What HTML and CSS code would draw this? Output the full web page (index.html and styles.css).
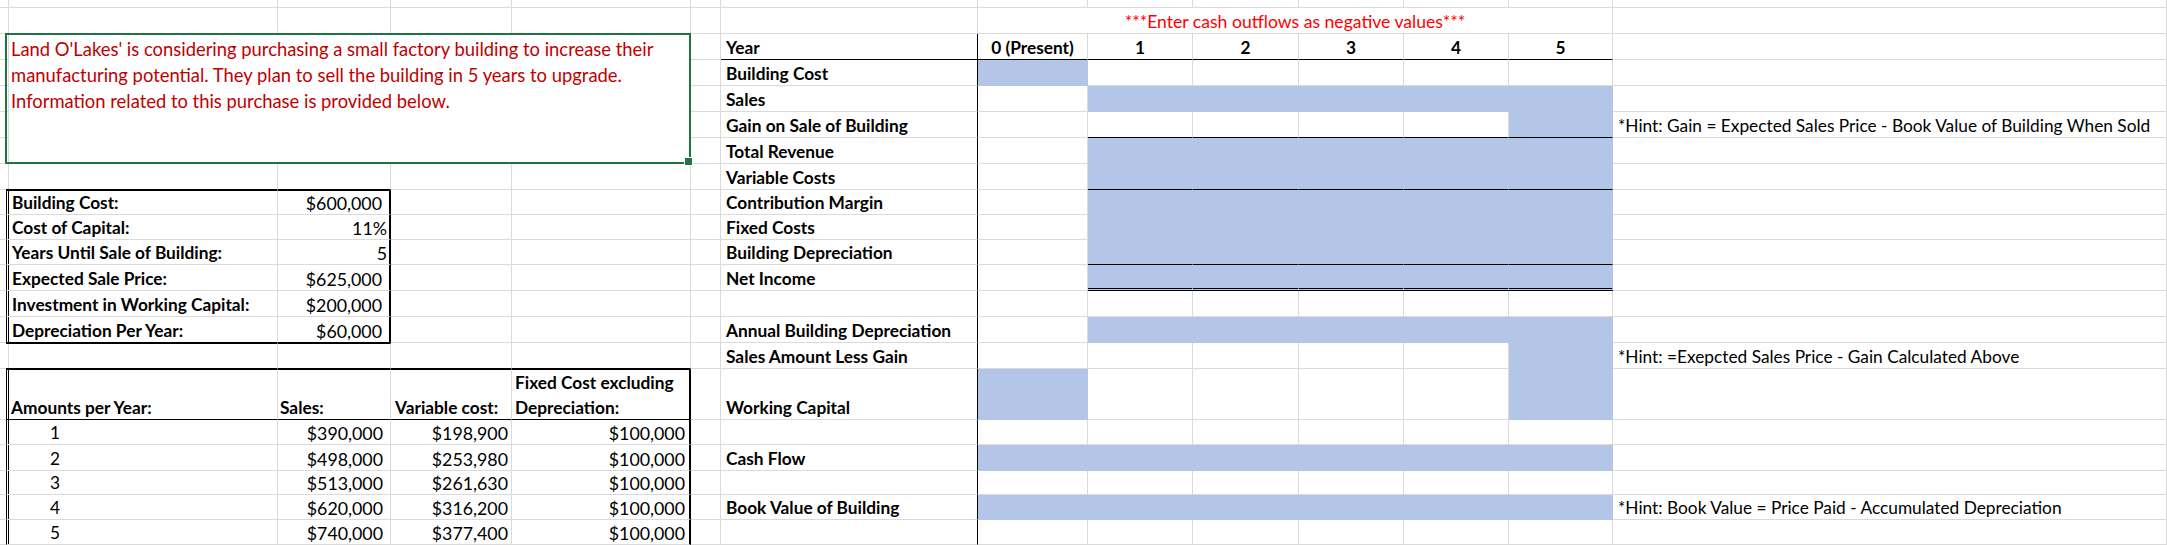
FILE: index.html
```html
<!DOCTYPE html>
<html lang="en">
<head>
<meta charset="utf-8">
<title>Land O'Lakes – Building Purchase</title>
<link rel="stylesheet" href="styles.css">
</head>
<body>
<div class="sheet">
<!-- row 0 -->
<div class="c"></div><div class="c"></div><div class="c"></div><div class="c"></div><div class="c"></div><div class="c"></div><div class="c"></div><div class="c"></div><div class="c"></div><div class="c"></div><div class="c"></div><div class="c"></div><div class="c"></div><div class="c"></div>
<!-- row 1 -->
<div class="c"></div><div class="c"></div><div class="c"></div><div class="c"></div><div class="c"></div><div class="c"></div><div class="c"></div>
<div class="c red">***Enter cash outflows as negative values***</div>
<div class="c"></div>
<!-- row 2 -->
<div class="c"></div>
<div class="note">Land O'Lakes' is considering purchasing a small factory building to increase their<br>manufacturing potential. They plan to sell the building in 5 years to upgrade.<br>Information related to this purchase is provided below.</div>
<div class="c"></div>
<div class="c b kb kr lbl">Year</div>
<div class="c b m kb">0 (Present)</div>
<div class="c b m kb">1</div><div class="c b m kb">2</div><div class="c b m kb">3</div><div class="c b m kb">4</div><div class="c b m kb">5</div>
<div class="c"></div>
<!-- row 3 -->
<div class="c"></div><div class="c"></div>
<div class="c b kr lbl">Building Cost</div>
<div class="c f"></div><div class="c"></div><div class="c"></div><div class="c"></div><div class="c"></div><div class="c"></div><div class="c"></div>
<!-- row 4 -->
<div class="c"></div><div class="c"></div>
<div class="c b kr lbl">Sales</div>
<div class="c"></div><div class="c f"></div><div class="c f"></div><div class="c f"></div><div class="c f"></div><div class="c f"></div><div class="c"></div>
<!-- row 5 -->
<div class="c"></div><div class="c"></div>
<div class="c b kr lbl">Gain on Sale of Building</div>
<div class="c"></div><div class="c kb"></div><div class="c kb"></div><div class="c kb"></div><div class="c kb"></div><div class="c f kb"></div>
<div class="c hint">*Hint: Gain = Expected Sales Price - Book Value of Building When Sold</div>
<!-- row 6 -->
<div class="c"></div><div class="c"></div>
<div class="c b kr lbl">Total Revenue</div>
<div class="c"></div><div class="c f"></div><div class="c f"></div><div class="c f"></div><div class="c f"></div><div class="c f"></div><div class="c"></div>
<!-- row 7 -->
<div class="c"></div><div class="c kb"></div><div class="c kb"></div><div class="c"></div><div class="c"></div><div class="c"></div>
<div class="c b kr lbl">Variable Costs</div>
<div class="c"></div><div class="c f kb"></div><div class="c f kb"></div><div class="c f kb"></div><div class="c f kb"></div><div class="c f kb"></div><div class="c"></div>
<!-- row 8 -->
<div class="c kr"></div>
<div class="c b tl tt pl5">Building Cost:</div>
<div class="c r tr tt pr7">$600,000</div>
<div class="c"></div><div class="c"></div><div class="c"></div>
<div class="c b kr lbl">Contribution Margin</div>
<div class="c"></div><div class="c f"></div><div class="c f"></div><div class="c f"></div><div class="c f"></div><div class="c f"></div><div class="c"></div>
<!-- row 9 -->
<div class="c kr"></div>
<div class="c b tl pl5">Cost of Capital:</div>
<div class="c r tr pr2">11%</div>
<div class="c"></div><div class="c"></div><div class="c"></div>
<div class="c b kr lbl">Fixed Costs</div>
<div class="c"></div><div class="c f"></div><div class="c f"></div><div class="c f"></div><div class="c f"></div><div class="c f"></div><div class="c"></div>
<!-- row 10 -->
<div class="c kr"></div>
<div class="c b tl pl5">Years Until Sale of Building:</div>
<div class="c r tr pr2">5</div>
<div class="c"></div><div class="c"></div><div class="c"></div>
<div class="c b kr lbl">Building Depreciation</div>
<div class="c"></div><div class="c f kb"></div><div class="c f kb"></div><div class="c f kb"></div><div class="c f kb"></div><div class="c f kb"></div><div class="c"></div>
<!-- row 11 -->
<div class="c kr"></div>
<div class="c b tl pl5">Expected Sale Price:</div>
<div class="c r tr pr7">$625,000</div>
<div class="c"></div><div class="c"></div><div class="c"></div>
<div class="c b kr lbl">Net Income</div>
<div class="c"></div><div class="c f dbl"></div><div class="c f dbl"></div><div class="c f dbl"></div><div class="c f dbl"></div><div class="c f dbl"></div><div class="c"></div>
<!-- row 12 -->
<div class="c kr"></div>
<div class="c b tl pl5">Investment in Working Capital:</div>
<div class="c r tr pr7">$200,000</div>
<div class="c"></div><div class="c"></div><div class="c"></div>
<div class="c kr"></div>
<div class="c"></div><div class="c"></div><div class="c"></div><div class="c"></div><div class="c"></div><div class="c"></div><div class="c"></div>
<!-- row 13 -->
<div class="c kr"></div>
<div class="c b tl kb pl5">Depreciation Per Year:</div>
<div class="c r tr kb pr7">$60,000</div>
<div class="c"></div><div class="c"></div><div class="c"></div>
<div class="c b kr lbl">Annual Building Depreciation</div>
<div class="c"></div><div class="c f"></div><div class="c f"></div><div class="c f"></div><div class="c f"></div><div class="c f"></div><div class="c"></div>
<!-- row 14 -->
<div class="c"></div><div class="c tt kb"></div><div class="c tt kb"></div><div class="c kb"></div><div class="c kb"></div><div class="c"></div>
<div class="c b kr lbl">Sales Amount Less Gain</div>
<div class="c"></div><div class="c"></div><div class="c"></div><div class="c"></div><div class="c"></div><div class="c f"></div>
<div class="c hint">*Hint: =Exepcted Sales Price - Gain Calculated Above</div>
<!-- row 15 -->
<div class="c kr"></div>
<div class="c b tl tt kb pl4">Amounts per Year:</div>
<div class="c b tt kb pl2">Sales:</div>
<div class="c b tt kb pl4">Variable cost:</div>
<div class="wrap b tt kb tr">Fixed Cost excluding<br>Depreciation:</div>
<div class="c"></div>
<div class="c b kr lbl">Working Capital</div>
<div class="c f"></div><div class="c"></div><div class="c"></div><div class="c"></div><div class="c"></div><div class="c f"></div><div class="c"></div>
<!-- row 16 -->
<div class="c kr"></div>
<div class="c tl yr">1</div>
<div class="c r pr7">$390,000</div>
<div class="c r pr3">$198,900</div>
<div class="c r tr pr4">$100,000</div>
<div class="c"></div>
<div class="c kr"></div>
<div class="c"></div><div class="c"></div><div class="c"></div><div class="c"></div><div class="c"></div><div class="c"></div><div class="c"></div>
<!-- row 17 -->
<div class="c kr"></div>
<div class="c tl yr">2</div>
<div class="c r pr7">$498,000</div>
<div class="c r pr3">$253,980</div>
<div class="c r tr pr4">$100,000</div>
<div class="c"></div>
<div class="c b kr lbl">Cash Flow</div>
<div class="c f"></div><div class="c f"></div><div class="c f"></div><div class="c f"></div><div class="c f"></div><div class="c f"></div><div class="c"></div>
<!-- row 18 -->
<div class="c kr"></div>
<div class="c tl yr">3</div>
<div class="c r pr7">$513,000</div>
<div class="c r pr3">$261,630</div>
<div class="c r tr pr4">$100,000</div>
<div class="c"></div>
<div class="c kr"></div>
<div class="c"></div><div class="c"></div><div class="c"></div><div class="c"></div><div class="c"></div><div class="c"></div><div class="c"></div>
<!-- row 19 -->
<div class="c kr"></div>
<div class="c tl yr">4</div>
<div class="c r pr7">$620,000</div>
<div class="c r pr3">$316,200</div>
<div class="c r tr pr4">$100,000</div>
<div class="c"></div>
<div class="c b kr lbl">Book Value of Building</div>
<div class="c f"></div><div class="c f"></div><div class="c f"></div><div class="c f"></div><div class="c f"></div><div class="c f"></div>
<div class="c hint">*Hint: Book Value = Price Paid - Accumulated Depreciation</div>
<!-- row 20 -->
<div class="c kr"></div>
<div class="c tl yr">5</div>
<div class="c r pr7">$740,000</div>
<div class="c r pr3">$377,400</div>
<div class="c r tr pr4">$100,000</div>
<div class="c"></div>
<div class="c kr"></div>
<div class="c"></div><div class="c"></div><div class="c"></div><div class="c"></div><div class="c"></div><div class="c"></div><div class="c"></div>
</div>
</body>
</html>
```

FILE: styles.css
```css
* { box-sizing: border-box; }

html, body {
  margin: 0;
  padding: 0;
  background: #ffffff;
  overflow: hidden;
}

.sheet {
  display: grid;
  width: 2167px;
  grid-template-columns: 6px 272px 113px 121px 179px 30px 257px 110px 105px 106px 105px 105px 104px 554px;
  grid-template-rows: 8px 26px 26px 26px 26px 26px 26px 26px 25px 25px 25px 26px 26px 26px 26px 51px 25px 26px 24px 25px 25px;
  font-family: Lato, "Noto Sans", sans-serif;
  font-size: 17.3px;
  color: #000;
}

.c {
  display: flex;
  align-items: flex-end;
  min-width: 0;
  padding: 0 4px;
  line-height: 22px;
  white-space: nowrap;
  border-right: 1px solid #dadada;
  border-bottom: 1px solid #dadada;
}

.wrap {
  padding: 0 3px;
  line-height: 25px;
  white-space: nowrap;
  border-right: 1px solid #dadada;
  border-bottom: 1px solid #dadada;
}

.b { font-weight: 700; }
.r { justify-content: flex-end; font-size: 17.8px; }
.m { justify-content: center; }

.lbl { padding-left: 5px; }
.hint { padding-left: 5px; }
.pl2 { padding-left: 2px; }
.pl4 { padding-left: 4px; }
.pl5 { padding-left: 5px; }
.pr2 { padding-right: 2px; }
.pr3 { padding-right: 3px; }
.pr4 { padding-right: 4px; }
.pr7 { padding-right: 7px; }
.yr { padding-left: 43px; }

.red {
  grid-column: span 6;
  justify-content: center;
  color: #ff0000;
  font-size: 17.6px;
}

/* blue input fill */
.f {
  background: #b4c6e7;
  border-right-color: #b4c6e7;
  border-bottom-color: #b4c6e7;
}

/* black borders */
.kb { border-bottom-color: #000; }
.kr { border-right-color: #000; }
.dbl { border-bottom: 3px double #000; }
.tl { border-left: 1px solid #000; }
.tt { border-top: 1px solid #000; }
.tr { border-right: 2px solid #000; }

/* merged description cell with selection frame */
.note {
  grid-column: span 4;
  grid-row: span 5;
  position: relative;
  padding: 2px 5px 0;
  font-size: 18.4px;
  line-height: 26px;
  color: #c00000;
  white-space: nowrap;
  border-right: 1px solid #dadada;
  border-bottom: 1px solid #dadada;
}

.note::before {
  content: "";
  position: absolute;
  left: -1px;
  top: -1px;
  right: -1px;
  bottom: -1px;
  border: 2px solid #217346;
}

.note::after {
  content: "";
  position: absolute;
  right: -3px;
  bottom: -3px;
  width: 7px;
  height: 7px;
  background: #217346;
  border: 1px solid #ffffff;
}
```
